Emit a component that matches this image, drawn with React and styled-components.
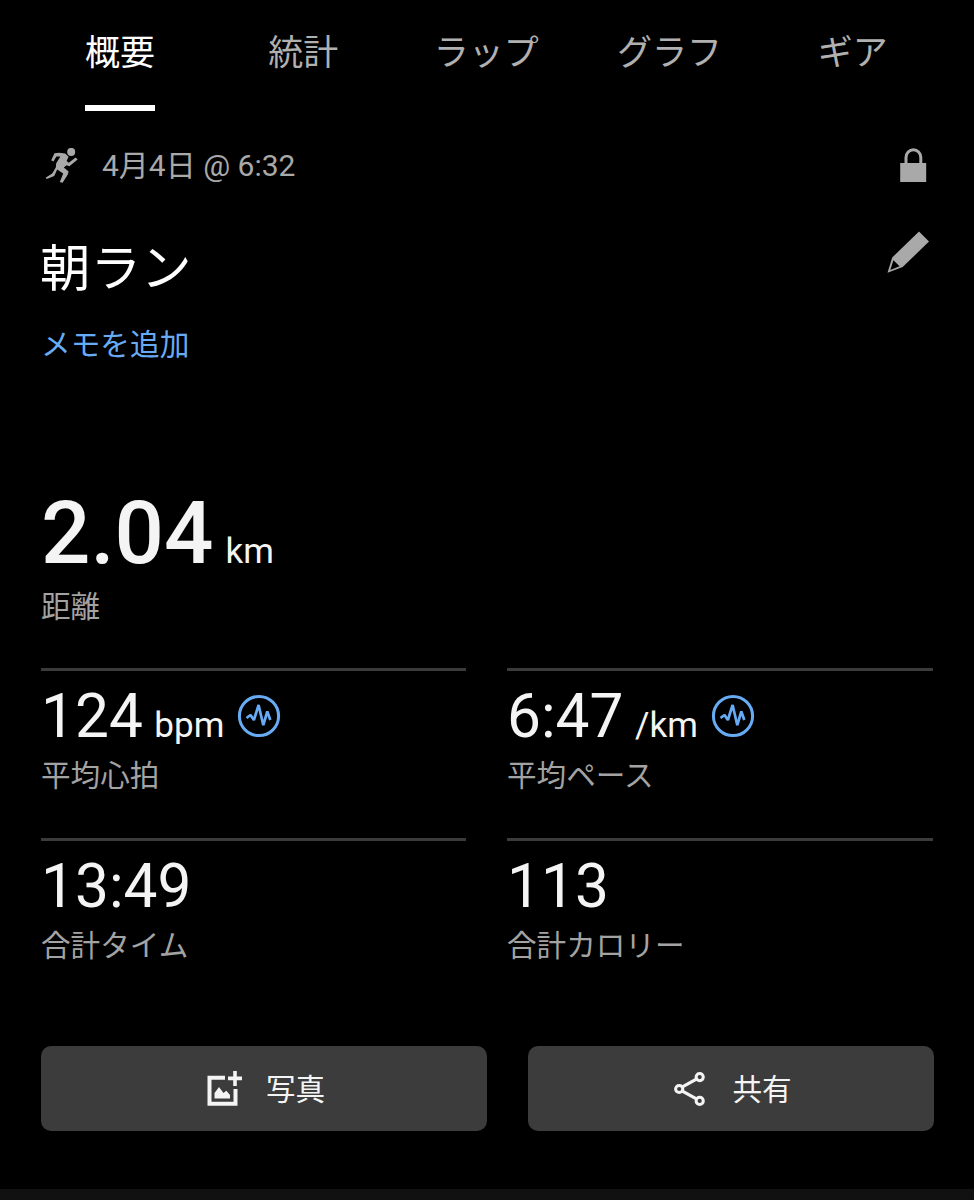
import React from 'react';
import styled, { createGlobalStyle } from 'styled-components';

const GlobalStyle = createGlobalStyle`
  * { box-sizing: border-box; }
  html, body { margin: 0; padding: 0; background: #000; }
  body { font-family: Roboto, "Noto Sans CJK JP", sans-serif; font-weight: 400; }
`;

const Screen = styled.div`
  width: 974px;
  height: 1200px;
  overflow: hidden;
  display: flex;
  flex-direction: column;
  background: #000;
  color: #f4f4f4;
`;

const Tabs = styled.nav`
  display: grid;
  grid-template-columns: repeat(5, 183.2px);
  padding-left: 28.4px;
  height: 111px;
`;

const Tab = styled.div`
  justify-self: center;
  height: 111px;
  padding-top: 28px;
  line-height: 52px;
  font-size: 35px;
  white-space: nowrap;
  color: ${(p) => (p.$active ? '#fff' : '#b0b0b0')};
  border-bottom: 6px solid ${(p) => (p.$active ? '#fff' : 'transparent')};
`;

const Content = styled.main`
  flex: 1;
  padding: 0 41px;
`;

const MetaRow = styled.div`
  display: flex;
  align-items: center;
  height: 40px;
  margin-top: 35px;
  padding-left: 4px;
`;

const DateText = styled.span`
  margin-left: 23px;
  font-size: 30px;
  line-height: 40px;
  color: #a9a9a9;
  flex: 1;
`;

const TitleRow = styled.div`
  display: flex;
  justify-content: space-between;
  height: 76px;
  margin-top: 45px;
`;

const Title = styled.h1`
  margin: 0 0 0 -1px;
  font-size: 50.5px;
  font-weight: 400;
  line-height: 76px;
  color: #fff;
`;

const MemoLink = styled.a`
  display: block;
  margin-top: 18px;
  font-size: 29.7px;
  line-height: 40px;
  color: #68abf5;
`;

const Label = styled.div`
  font-size: 29.6px;
  line-height: 40px;
  color: #a3a3a3;
`;

const Hero = styled.section`
  margin-top: 117px;
  height: 186px;
`;

const Value = styled.div`
  display: flex;
  align-items: baseline;
  height: ${(p) => (p.$hero ? 105 : 74)}px;
  line-height: ${(p) => (p.$hero ? 102 : 70)}px;
  font-size: ${(p) => (p.$hero ? 87 : 60.4)}px;
  font-weight: ${(p) => (p.$hero ? 500 : 400)};
`;

const Unit = styled.span`
  margin-left: ${(p) => (p.$hero ? 12 : 11.5)}px;
  font-size: 35px;
  font-weight: 400;
`;

const Stats = styled.section`
  display: grid;
  grid-template-columns: 425px 426px;
  column-gap: 41px;
`;

const Stat = styled.div`
  height: 169.5px;
  border-top: 3px solid #3b3b3b;
  padding-top: 11px;
`;

const PulseIcon = styled.svg`
  align-self: flex-start;
  margin: 12px 0 0 13px;
  flex: none;
`;

const Actions = styled.div`
  display: grid;
  grid-template-columns: 446px 406px;
  column-gap: 41px;
  margin-top: 39px;
`;

const ActionButton = styled.button`
  display: flex;
  align-items: center;
  justify-content: center;
  gap: ${(p) => p.$gap}px;
  height: 85px;
  padding: 0 0 0 4px;
  border: 0;
  border-radius: 10px;
  background: #3c3c3c;
  color: #f4f4f4;
  font-family: inherit;
  font-size: 29.6px;
  line-height: 44px;
`;

const ActionText = styled.span`
  padding-top: 3px;
`;

const BottomStrip = styled.div`
  height: 11px;
  background: #111;
`;

const Pencil = styled.svg`
  flex: none;
  margin: 0 4px 0 0;
`;

const LockSvg = styled.svg`
  flex: none;
  margin: 0 6px 3px 0;
`;

const RunnerIcon = () => (
  <svg width="34" height="36" viewBox="0 0 34 36" fill="#a9a9a9">
    <circle cx="26.2" cy="3.9" r="4" />
    <path d="M9.5 5.2 14 4.8 20.2 5.6 23.6 8.8 21.6 13 23.8 14.8 30.6 9.4 32.6 11.6 24.4 18.2 21.6 17.2 18.8 19.4 23.6 23.4 22.8 26.4 17.6 34.8 14.8 34 18.2 25.4 12.2 21.4 9.2 28 1.8 31 0.6 29.8 7.2 25.6 10.8 19.5 11.2 15.2 15.4 8.6 11.4 8.6 8.4 13.6 6.2 12.2Z" />
  </svg>
);

const LockIcon = () => (
  <LockSvg width="27" height="36" viewBox="0 0 27 36">
    <path d="M6 17V10.5a7.4 7.8 0 0 1 14.8 0V17" fill="none" stroke="#a9a9a9" strokeWidth="3" />
    <path d="M0.2 16H26.2V35H0.2Z" fill="#a9a9a9" />
  </LockSvg>
);

const PencilIcon = () => (
  <Pencil width="43" height="43" viewBox="0 0 43 43">
    <path d="M33 0.5 43 10.5 16.7 36 1.5 41.8 6.2 26.5Z M7.4 29.2 4.3 38.9 13.6 35.2Z" fill="#a9a9a9" fillRule="evenodd" />
  </Pencil>
);

const Pulse = () => (
  <PulseIcon width="44" height="44" viewBox="0 0 44 44" fill="none" stroke="#68abf5">
    <circle cx="22" cy="22" r="19.6" strokeWidth="3" />
    <path d="M9.5 24 13.5 21 16.9 26 21.6 11 26.3 31.2 30.3 17.5 33.3 26" strokeWidth="2.7" strokeLinejoin="bevel" />
  </PulseIcon>
);

const PhotoIcon = () => (
  <svg width="36" height="36" viewBox="0 0 36 36">
    <path d="M18 6.8H2.5V32.7H28.5V18" fill="none" stroke="#f4f4f4" strokeWidth="4" />
    <path d="M28 0V15M21 7.4H35" fill="none" stroke="#f4f4f4" strokeWidth="3.6" />
    <path d="M7.5 27.5V22L12 16 16.5 22 19.3 19.8 23 24V27.5Z" fill="#f4f4f4" />
  </svg>
);

const ShareIcon = () => (
  <svg width="32" height="36" viewBox="0 0 32 36" fill="none" stroke="#f4f4f4">
    <path d="M8.4 15.9 22.4 8.1M8.4 20.1 22.4 27.9" strokeWidth="3.3" />
    <circle cx="5.2" cy="18" r="3.6" strokeWidth="3" />
    <circle cx="25.7" cy="6.1" r="3.6" strokeWidth="3" />
    <circle cx="25.7" cy="29.9" r="3.6" strokeWidth="3" />
  </svg>
);

const tabs = ['概要', '統計', 'ラップ', 'グラフ', 'ギア'];

const stats = [
  { value: '124', unit: 'bpm', label: '平均心拍', pulse: true },
  { value: '6:47', unit: '/km', label: '平均ペース', pulse: true },
  { value: '13:49', label: '合計タイム' },
  { value: '113', label: '合計カロリー' },
];

export default function App() {
  return (
    <Screen lang="ja">
      <GlobalStyle />
      <Tabs>
        {tabs.map((t, i) => (
          <Tab key={t} $active={i === 0}>{t}</Tab>
        ))}
      </Tabs>
      <Content>
        <MetaRow>
          <RunnerIcon />
          <DateText>4月4日 @ 6:32</DateText>
          <LockIcon />
        </MetaRow>
        <TitleRow>
          <Title>朝ラン</Title>
          <PencilIcon />
        </TitleRow>
        <MemoLink>メモを追加</MemoLink>
        <Hero>
          <Value $hero>2.04<Unit $hero>km</Unit></Value>
          <Label>距離</Label>
        </Hero>
        <Stats>
          {stats.map((s) => (
            <Stat key={s.label}>
              <Value>
                {s.value}
                {s.unit && <Unit>{s.unit}</Unit>}
                {s.pulse && <Pulse />}
              </Value>
              <Label>{s.label}</Label>
            </Stat>
          ))}
        </Stats>
        <Actions>
          <ActionButton $gap={23}><PhotoIcon /><ActionText>写真</ActionText></ActionButton>
          <ActionButton $gap={26}><ShareIcon /><ActionText>共有</ActionText></ActionButton>
        </Actions>
      </Content>
      <BottomStrip />
    </Screen>
  );
}
